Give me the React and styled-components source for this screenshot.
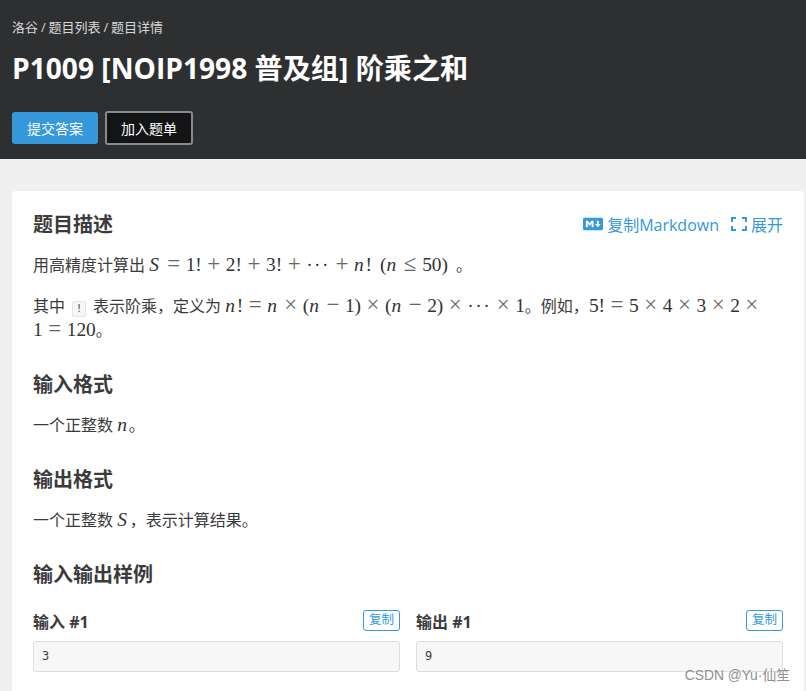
import React from "react";
import styled, { createGlobalStyle } from "styled-components";
import { FaMarkdown } from "react-icons/fa";

const GlobalStyle = createGlobalStyle`
  html, body {
    margin: 0;
    padding: 0;
    height: 691px;
    overflow: hidden;
    background: #efefef;
    font-family: "Open Sans", "Noto Sans CJK SC", sans-serif;
    color: #3b3b3b;
  }
`;

const Page = styled.div`
  position: relative;
  width: 806px;
  height: 691px;
  overflow: hidden;
`;

const Header = styled.header`
  height: 159px;
  box-sizing: border-box;
  padding: 18px 12px 0;
  background: #2e2f31;
  color: #fff;
`;

const Crumbs = styled.div`
  font-size: 13px;
  line-height: 18px;
  word-spacing: -0.5px;
  color: #d8d8d8;
`;

const Title = styled.h1`
  margin: 11px 0 0;
  font-size: 28.15px;
  line-height: 42px;
  font-weight: 700;
`;

const Actions = styled.div`
  display: flex;
  align-items: center;
  gap: 7px;
  margin-top: 22px;
`;

const Button = styled.button`
  font-family: inherit;
  font-size: 14px;
  color: #fff;
  border-radius: 3px;
  padding: 0;
  width: ${(p) => (p.$dark ? "88px" : "86px")};
  height: ${(p) => (p.$dark ? "34px" : "32px")};
  background: ${(p) => (p.$dark ? "#131416" : "#3498db")};
  border: ${(p) => (p.$dark ? "2px solid #8a8a8a" : "none")};
`;

const Card = styled.main`
  margin: 32px 2px 0 12px;
  padding: 17px 21px 0;
  background: #fff;
  border-radius: 4px;
  height: 520px;
  box-sizing: border-box;
`;

const TitleRow = styled.div`
  display: flex;
  justify-content: space-between;
  align-items: center;
  height: 34px;
`;

const Heading = styled.h2`
  margin: ${(p) => p.$top || 0}px 0 0;
  font-size: 20px;
  line-height: 34px;
  font-weight: 700;
  color: #3b3b3b;
`;

const Tools = styled.div`
  display: flex;
  align-items: center;
  gap: 12px;
  margin-bottom: 2px;
  color: #3498db;
  font-size: 16px;
`;

const Tool = styled.span`
  display: inline-flex;
  align-items: center;
  gap: 4px;
`;

const Para = styled.p`
  margin: ${(p) => p.$top || 0}px 0 0;
  font-size: 16px;
  line-height: 24px;
  white-space: nowrap;
`;

const Math = styled.span`
  font-family: "Liberation Serif", "DejaVu Serif", serif;
  font-size: 19.4px;
  color: #333;
`;

const Var = styled.i`
  display: inline-block;
  width: ${(p) => p.$w || 11.6}px;
  font-style: italic;
`;

const Op = styled.span`
  display: inline-block;
  width: 15px;
  margin: 0 4.5px;
  font-size: 23px;
  line-height: 0;
  text-align: center;
  color: #666;
`;

const Dots = styled.span`
  letter-spacing: 1.5px;
`;

const Gap = styled.span`
  display: inline-block;
  width: ${(p) => p.$w}px;
`;

const Code = styled.code`
  display: inline-block;
  box-sizing: border-box;
  width: 14px;
  height: 16px;
  margin: 0 7px;
  font-family: "DejaVu Sans Mono", monospace;
  font-size: 11px;
  line-height: 14px;
  text-align: center;
  vertical-align: 0;
  color: #555;
  background: #f7f7f7;
  border: 1px solid #e4e4e4;
  border-radius: 2px;
`;

const Samples = styled.div`
  display: grid;
  grid-template-columns: 367px 367px;
  gap: 16px;
  margin-top: 18px;
`;

const SampleHead = styled.div`
  display: flex;
  justify-content: space-between;
  align-items: center;
  height: 21px;
  margin-bottom: 10px;
`;

const SampleTitle = styled.h3`
  margin: 0;
  padding-top: 4px;
  font-size: 16px;
  line-height: 21px;
  font-weight: 700;
`;

const CopyButton = styled.span`
  box-sizing: border-box;
  width: 37px;
  height: 21px;
  font-size: 12.5px;
  line-height: 18px;
  text-align: center;
  color: #3498db;
  border: 1px solid #3498db;
  border-radius: 3px;
`;

const SampleBox = styled.pre`
  margin: 0;
  box-sizing: border-box;
  height: 31px;
  padding: 0 8px;
  font-family: "DejaVu Sans Mono", monospace;
  font-size: 12px;
  line-height: 29px;
  background: #f7f7f7;
  border: 1px solid #dcdcdc;
  border-radius: 3px;
`;

const Watermark = styled.div`
  position: absolute;
  right: 16px;
  bottom: 6px;
  font-family: "Liberation Sans", "Noto Sans CJK SC", sans-serif;
  font-size: 13.8px;
  line-height: 18px;
  color: #8f8f8f;
`;

function ExpandIcon() {
  return (
    <svg width="16" height="14" viewBox="0 0 16 14" fill="none" stroke="#3498db" strokeWidth="2">
      <path d="M1 5V1h4M11 1h4v4M15 9v4h-4M5 13H1V9" />
    </svg>
  );
}

function Sample({ title, value }) {
  return (
    <div>
      <SampleHead>
        <SampleTitle>{title}</SampleTitle>
        <CopyButton>复制</CopyButton>
      </SampleHead>
      <SampleBox>{value}</SampleBox>
    </div>
  );
}

export default function App() {
  return (
    <Page>
      <GlobalStyle />
      <Header>
        <Crumbs>洛谷 / 题目列表 / 题目详情</Crumbs>
        <Title>P1009 [NOIP1998 普及组] 阶乘之和</Title>
        <Actions>
          <Button>提交答案</Button>
          <Button $dark>加入题单</Button>
        </Actions>
      </Header>
      <Card>
        <TitleRow>
          <Heading>题目描述</Heading>
          <Tools>
            <Tool>
              <FaMarkdown size={20} />
              复制Markdown
            </Tool>
            <Tool>
              <ExpandIcon />
              展开
            </Tool>
          </Tools>
        </TitleRow>
        <Para $top={11}>
          用高精度计算出{" "}
          <Math>
            <Var $w={12.5}>S</Var>
            <Op>=</Op>1!<Op>+</Op>2!<Op>+</Op>3!<Op>+</Op>
            <Dots>···</Dots>
            <Op>+</Op>
            <Var>n</Var>!<Gap $w={8} />(<Var>n</Var>
            <Op>≤</Op>50)
          </Math>
          <Gap $w={8} />。
        </Para>
        <Para $top={17}>
          其中<Code>!</Code>表示阶乘，定义为{" "}
          <Math>
            <Var>n</Var>!<Op>=</Op>
            <Var>n</Var>
            <Op>×</Op>(<Var>n</Var>
            <Op>−</Op>1)<Op>×</Op>(<Var>n</Var>
            <Op>−</Op>2)<Op>×</Op>
            <Dots>···</Dots>
            <Op>×</Op>1
          </Math>
          。例如，
          <Math>
            5!<Op>=</Op>5<Op>×</Op>4<Op>×</Op>3<Op>×</Op>2<Op>×</Op>
          </Math>
          <br />
          <Math>
            1<Op>=</Op>120
          </Math>
          。
        </Para>
        <Heading $top={26}>输入格式</Heading>
        <Para $top={11}>
          一个正整数 <Math><Var>n</Var></Math>。
        </Para>
        <Heading $top={26}>输出格式</Heading>
        <Para $top={11}>
          一个正整数 <Math><Var $w={12.5}>S</Var></Math>，表示计算结果。
        </Para>
        <Heading $top={26}>输入输出样例</Heading>
        <Samples>
          <Sample title="输入 #1" value="3" />
          <Sample title="输出 #1" value="9" />
        </Samples>
      </Card>
      <Watermark>CSDN @Yu·仙笙</Watermark>
    </Page>
  );
}
